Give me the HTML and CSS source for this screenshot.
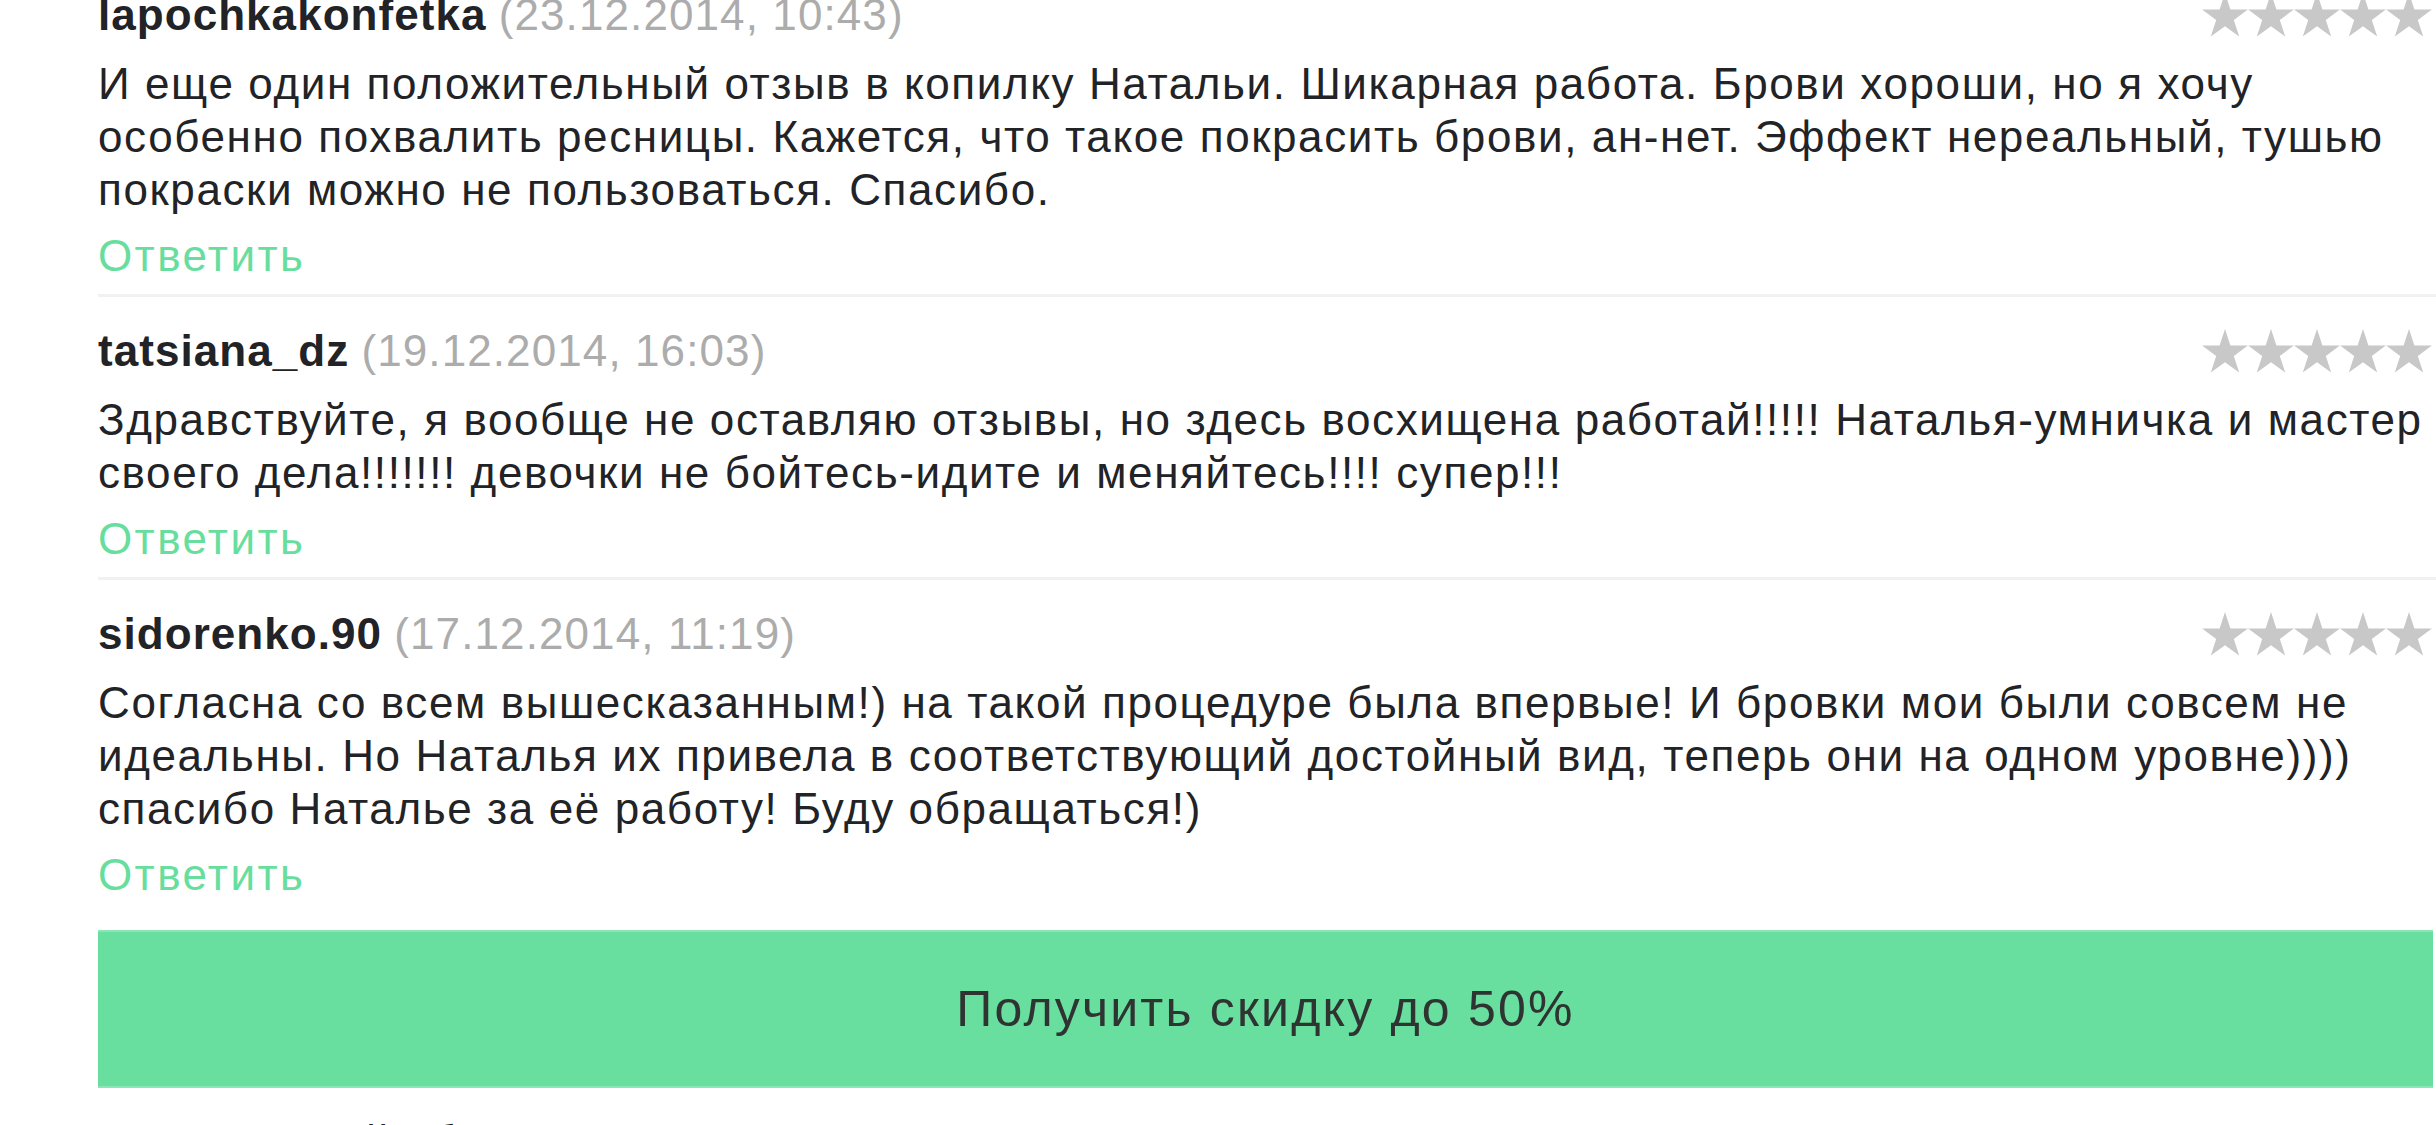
FILE: index.html
```html
<!DOCTYPE html>
<html lang="ru">
<head>
<meta charset="utf-8">
<title>Отзывы</title>
<link rel="stylesheet" href="styles.css">
</head>
<body>
<svg width="0" height="0" class="defs" aria-hidden="true">
  <defs>
    <symbol id="star" viewBox="0 0 46 44">
      <polygon points="23,0 28.4,16.6 45.9,16.6 31.8,26.9 37.2,43.5 23,33.2 8.8,43.5 14.2,26.9 0.1,16.6 17.6,16.6"/>
    </symbol>
  </defs>
</svg>
<main class="reviews">
  <article class="review">
    <header class="review-head">
      <div class="author"><span class="name">lapochkakonfetka</span> <span class="date">(23.12.2014, 10:43)</span></div>
      <div class="stars">
        <svg class="star"><use href="#star"/></svg><svg class="star"><use href="#star"/></svg><svg class="star"><use href="#star"/></svg><svg class="star"><use href="#star"/></svg><svg class="star"><use href="#star"/></svg>
      </div>
    </header>
    <p class="text">И еще один положительный отзыв в копилку Натальи. Шикарная работа. Брови хороши, но я хочу<br>особенно похвалить ресницы. Кажется, что такое покрасить брови, ан-нет. Эффект нереальный, тушью<br>покраски можно не пользоваться. Спасибо.</p>
    <a class="reply">Ответить</a>
  </article>
  <article class="review">
    <header class="review-head">
      <div class="author"><span class="name">tatsiana_dz</span> <span class="date">(19.12.2014, 16:03)</span></div>
      <div class="stars">
        <svg class="star"><use href="#star"/></svg><svg class="star"><use href="#star"/></svg><svg class="star"><use href="#star"/></svg><svg class="star"><use href="#star"/></svg><svg class="star"><use href="#star"/></svg>
      </div>
    </header>
    <p class="text">Здравствуйте, я вообще не оставляю отзывы, но здесь восхищена работай!!!!! Наталья-умничка и мастер<br>своего дела!!!!!!! девочки не бойтесь-идите и меняйтесь!!!! супер!!!</p>
    <a class="reply">Ответить</a>
  </article>
  <article class="review review-last">
    <header class="review-head">
      <div class="author"><span class="name">sidorenko.90</span> <span class="date">(17.12.2014, 11:19)</span></div>
      <div class="stars">
        <svg class="star"><use href="#star"/></svg><svg class="star"><use href="#star"/></svg><svg class="star"><use href="#star"/></svg><svg class="star"><use href="#star"/></svg><svg class="star"><use href="#star"/></svg>
      </div>
    </header>
    <p class="text">Согласна со всем вышесказанным!) на такой процедуре была впервые! И бровки мои были совсем не<br>идеальны. Но Наталья их привела в соответствующий достойный вид, теперь они на одном уровне))))<br>спасибо Наталье за её работу! Буду обращаться!)</p>
    <a class="reply">Ответить</a>
  </article>
  <button class="discount">Получить скидку до 50%</button>
  <p class="more">запись онлайн без ожидания, оплата на месте</p>
</main>
</body>
</html>
```

FILE: styles.css
```css
html, body {
  margin: 0;
  padding: 0;
  background: #ffffff;
}

body {
  font-family: "Liberation Sans", Arial, sans-serif;
  font-size: 44px;
  line-height: 53px;
  color: #222326;
  overflow: hidden;
  height: 1125px;
}

.defs {
  position: absolute;
  width: 0;
  height: 0;
}

.reviews {
  display: flex;
  flex-direction: column;
  margin: -12px 0 0 98px;
}

.review {
  display: flex;
  flex-direction: column;
  padding: 27px 0 12px 0;
  border-bottom: 3px solid #f1f1f1;
}

.review:first-child {
  padding-top: 0;
}

.review-last {
  border-bottom: none;
  padding-bottom: 29px;
}

.review-head {
  display: flex;
  justify-content: space-between;
  align-items: center;
  height: 53px;
  padding-right: 4px;
}

.name {
  font-weight: bold;
  color: #222326;
  letter-spacing: 1.05px;
}

.date {
  color: #acacac;
  letter-spacing: 1.1px;
}

.stars {
  display: flex;
  height: 44px;
}

.star {
  width: 46px;
  height: 44px;
  fill: #c8c8c8;
}

.text {
  margin: 16px 0 13px 0;
  white-space: nowrap;
  letter-spacing: 1.6px;
}

.reply {
  color: #67de9d;
  text-decoration: none;
  align-self: flex-start;
  letter-spacing: 2.4px;
}

.discount {
  display: block;
  margin: 0 3px 0 0;
  height: 158px;
  border: none;
  border-top: 2px solid #8ae6b4;
  border-bottom: 2px solid #8ae6b4;
  background: #68df9e;
  color: #2f3331;
  font-family: "Liberation Sans", Arial, sans-serif;
  font-size: 50px;
  letter-spacing: 2.2px;
  text-align: center;
  padding: 0;
}

.more {
  margin: 27px 0 0 0;
  color: #222326;
  letter-spacing: 1.6px;
  white-space: nowrap;
}
```
